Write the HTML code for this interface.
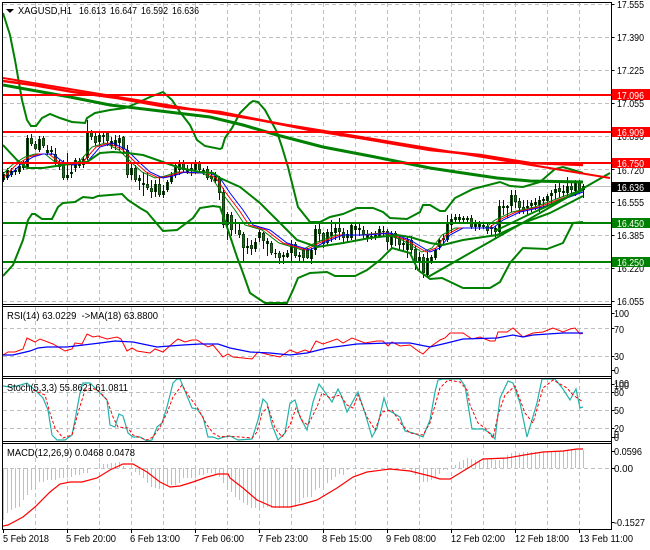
<!DOCTYPE html>
<html><head><meta charset="utf-8"><style>
html,body{margin:0;padding:0;background:#fff}
svg{display:block}
text{font-family:"Liberation Sans",sans-serif;font-size:10.5px;fill:#000}
</style></head><body>
<svg width="650" height="550" viewBox="0 0 650 550" xmlns="http://www.w3.org/2000/svg">
<defs><clipPath id="m"><rect x="3" y="3" width="608" height="301"/></clipPath>
<clipPath id="s"><rect x="3" y="379" width="608" height="62"/></clipPath></defs>
<rect width="650" height="550" fill="#fff"/>
<!-- grid -->
<g stroke="#c0c0c0" stroke-width="1" stroke-dasharray="4 3" fill="none">
<path d="M35.5 3V304M67.5 3V304M99.5 3V304M131.5 3V304M163.5 3V304M195.5 3V304M227.5 3V304M259.5 3V304M291.5 3V304M323.5 3V304M355.5 3V304M387.5 3V304M419.5 3V304M451.5 3V304M483.5 3V304M515.5 3V304M547.5 3V304M579.5 3V304"/>
<path d="M35.5 307V376M67.5 307V376M99.5 307V376M131.5 307V376M163.5 307V376M195.5 307V376M227.5 307V376M259.5 307V376M291.5 307V376M323.5 307V376M355.5 307V376M387.5 307V376M419.5 307V376M451.5 307V376M483.5 307V376M515.5 307V376M547.5 307V376M579.5 307V376"/>
<path d="M35.5 379V441M67.5 379V441M99.5 379V441M131.5 379V441M163.5 379V441M195.5 379V441M227.5 379V441M259.5 379V441M291.5 379V441M323.5 379V441M355.5 379V441M387.5 379V441M419.5 379V441M451.5 379V441M483.5 379V441M515.5 379V441M547.5 379V441M579.5 379V441"/>
<path d="M35.5 444V529M67.5 444V529M99.5 444V529M131.5 444V529M163.5 444V529M195.5 444V529M227.5 444V529M259.5 444V529M291.5 444V529M323.5 444V529M355.5 444V529M387.5 444V529M419.5 444V529M451.5 444V529M483.5 444V529M515.5 444V529M547.5 444V529M579.5 444V529"/>
<path d="M3 4.5H611M3 37.5H611M3 70.5H611M3 103.5H611M3 136.5H611M3 169.5H611M3 202.5H611M3 235.5H611M3 268.5H611M3 301.5H611"/>
<path d="M3 328.5H611M3 356.5H611M3 392.5H611M3 410.5H611M3 428.5H611M3 468.5H611"/>
</g>
<path d="M3 186.5H611" stroke="#c0c0c0" stroke-width="1"/>
<g clip-path="url(#m)" fill="none">
<!-- wicks -->
<path stroke="#002000" stroke-width="1" d="M3.5 172V182M7.5 168V180M11.5 168V177M15.5 168V175M19.5 164V174M23.5 160V170M27.5 135V168M31.5 134V146M35.5 141V150M39.5 136V152M43.5 136V148M47.5 145V155M51.5 146V155M55.5 148V165M59.5 160V170M63.5 160V180M67.5 153V180M71.5 165V178M75.5 158V172M79.5 158V168M83.5 156V168M87.5 120V160M91.5 130V140M95.5 132V146M99.5 132V146M103.5 132V143M107.5 131V146M111.5 137V149M115.5 135V150M119.5 135V150M123.5 136V155M127.5 145V178M131.5 163V180M135.5 165V182M139.5 175V190M143.5 172V196M147.5 172V190M151.5 180V198M155.5 180V197M159.5 178V197M163.5 185V198M167.5 180V192M171.5 172V184M175.5 163V178M179.5 160V175M183.5 160V172M187.5 165V174M191.5 163V176M195.5 160V174M199.5 161V172M203.5 168V175M207.5 166V180M211.5 170V182M215.5 172V183M219.5 176V200M223.5 188V228M227.5 212V240M231.5 212V236M235.5 219V234M239.5 222V238M243.5 232V261M247.5 238V254M251.5 240V255M255.5 238V252M259.5 230V242M263.5 232V249M267.5 238V256M271.5 241V255M275.5 249V258M279.5 251V264M283.5 252V264M287.5 250V258M291.5 240V262M295.5 242V258M299.5 252V263M303.5 248V262M307.5 248V259M311.5 248V264M315.5 225V255M319.5 221V242M323.5 232V248M327.5 229V246M331.5 220V242M335.5 224V240M339.5 218V240M343.5 228V244M347.5 230V242M351.5 224V240M355.5 224V240M359.5 224V236M363.5 226V240M367.5 230V242M371.5 232V240M375.5 231V240M379.5 226V238M383.5 226V236M387.5 229V250M391.5 231V248M395.5 231V246M399.5 235V250M403.5 238V252M407.5 236V258M411.5 236V254M415.5 246V270M419.5 252V272M423.5 254V278M427.5 252V277M431.5 255V264M435.5 248V260M439.5 238V250M443.5 234V244M447.5 215V242M451.5 214V233M455.5 214V224M459.5 214V224M463.5 216V224M467.5 216V222M471.5 215V229M475.5 220V231M479.5 221V230M483.5 222V229M487.5 224V234M491.5 225V235M495.5 226V238M499.5 200V236M503.5 200V215M507.5 205V218M511.5 190V212M515.5 190V208M519.5 198V214M523.5 200V214M527.5 200V216M531.5 200V212M535.5 198V210M539.5 196V212M543.5 197V208M547.5 194V206M551.5 190V204M555.5 184V199M559.5 183V198M563.5 185V197M567.5 177V197M571.5 181V195M575.5 180V196M579.5 180V193M583.5 184V198"/>
<!-- bodies -->
<path stroke="#104010" stroke-width="3" d="M3.5 174V180M7.5 170V178M11.5 171V175M15.5 170V172M19.5 166V172M23.5 163V168M27.5 138V167M31.5 138V144M35.5 144V149M39.5 139V150M43.5 138V146M47.5 150V153M51.5 150V152M55.5 154V163M59.5 163V167M63.5 163V178M67.5 175V178M71.5 172V174M75.5 160V168M79.5 161V166M83.5 159V165M87.5 132V158M91.5 132V137M95.5 136V143M99.5 135V142M103.5 135V137M107.5 133V141M111.5 141V146M115.5 140V146M119.5 138V143M123.5 137V149M127.5 150V175M131.5 168V175M135.5 168V180M139.5 178V181M143.5 183V185M147.5 184V188M151.5 188V192M155.5 184V192M159.5 184V195M163.5 191V195M167.5 182V190M171.5 175V182M175.5 165V175M179.5 162V170M183.5 162V170M187.5 170V172M191.5 168V171M195.5 163V170M199.5 163V170M203.5 170V172M207.5 169V178M211.5 176V179M215.5 176V181M219.5 178V193M223.5 192V225M227.5 214V225M231.5 215V230M235.5 222V224M239.5 230V235M243.5 234V248M247.5 246V248M251.5 245V249M255.5 242V249M259.5 232V238M263.5 233V241M267.5 241V244M271.5 243V253M275.5 253V254M279.5 253V258M283.5 255V257M287.5 253V257M291.5 244V253M295.5 244V256M299.5 255V257M303.5 250V258M307.5 250V258M311.5 250V259M315.5 229V250M319.5 229V234M323.5 233V244M327.5 232V243M331.5 232V236M335.5 228V233M339.5 228V232M343.5 232V238M347.5 234V238M351.5 225V238M355.5 226V230M359.5 228V230M363.5 230V235M367.5 235V238M371.5 236V238M375.5 235V238M379.5 229V236M383.5 231V232M387.5 231V242M391.5 233V245M395.5 233V238M399.5 238V245M403.5 243V245M407.5 240V250M411.5 240V250M415.5 249V262M419.5 257V262M423.5 257V273M427.5 258V275M431.5 257V262M435.5 250V258M439.5 240V247M443.5 238V240M447.5 222V240M451.5 219V225M455.5 217V220M459.5 217V220M463.5 218V220M467.5 218V220M471.5 218V227M475.5 223V227M479.5 224V227M483.5 225V227M487.5 226V231M491.5 227V229M495.5 228V232M499.5 206V232M503.5 206V208M507.5 206V208M511.5 195V206M515.5 195V202M519.5 201V208M523.5 207V211M527.5 206V208M531.5 203V206M535.5 202V205M539.5 200V205M543.5 199V201M547.5 196V201M551.5 193V196M555.5 189V193M559.5 188V192M563.5 191V193M567.5 186V193M571.5 186V190M575.5 182V191M579.5 182V190M583.5 186V190"/>
<path stroke="#000" stroke-width="1" d="M3.5 174V180M7.5 170V178M11.5 171V175M15.5 170V172M19.5 166V172M23.5 163V168M27.5 138V167M39.5 139V150M47.5 150V153M51.5 150V152M67.5 175V178M71.5 172V174M75.5 160V168M79.5 161V166M83.5 159V165M87.5 132V158M99.5 135V142M103.5 135V137M111.5 141V146M115.5 140V146M119.5 138V143M131.5 168V175M139.5 178V181M143.5 183V185M155.5 184V192M163.5 191V195M167.5 182V190M171.5 175V182M175.5 165V175M179.5 162V170M187.5 170V172M191.5 168V171M195.5 163V170M203.5 170V172M215.5 176V181M227.5 214V225M235.5 222V224M247.5 246V248M255.5 242V249M259.5 232V238M267.5 241V244M275.5 253V254M283.5 255V257M287.5 253V257M291.5 244V253M299.5 255V257M311.5 250V259M315.5 229V250M327.5 232V243M331.5 232V236M335.5 228V233M347.5 234V238M351.5 225V238M355.5 226V230M359.5 228V230M367.5 235V238M371.5 236V238M375.5 235V238M379.5 229V236M383.5 231V232M391.5 233V245M403.5 243V245M407.5 240V250M419.5 257V262M427.5 258V275M431.5 257V262M435.5 250V258M439.5 240V247M443.5 238V240M447.5 222V240M451.5 219V225M455.5 217V220M459.5 217V220M463.5 218V220M467.5 218V220M475.5 223V227M479.5 224V227M483.5 225V227M491.5 227V229M495.5 228V232M499.5 206V232M503.5 206V208M507.5 206V208M511.5 195V206M527.5 206V208M531.5 203V206M535.5 202V205M539.5 200V205M543.5 199V201M547.5 196V201M551.5 193V196M555.5 189V193M563.5 191V193M567.5 186V193M575.5 182V191M583.5 186V190"/>
<path stroke="#f00" stroke-width="1" d="M31.5 139V143M35.5 145V148M43.5 139V145M55.5 155V162M59.5 164V166M63.5 164V177M91.5 133V136M95.5 137V142M107.5 134V140M123.5 138V148M127.5 151V174M135.5 169V179M147.5 185V187M151.5 189V191M159.5 185V194M183.5 163V169M199.5 164V169M207.5 170V177M211.5 177V178M219.5 179V192M223.5 193V224M231.5 216V229M239.5 231V234M243.5 235V247M251.5 246V248M263.5 234V240M271.5 244V252M279.5 254V257M295.5 245V255M303.5 251V257M307.5 251V257M319.5 230V233M323.5 234V243M339.5 229V231M343.5 233V237M363.5 231V234M387.5 232V241M395.5 234V237M399.5 239V244M411.5 241V249M415.5 250V261M423.5 258V272M471.5 219V226M487.5 227V230M515.5 196V201M519.5 202V207M523.5 208V210M559.5 189V191M571.5 187V189M579.5 183V189"/>
<!-- fast MAs -->
<polyline stroke="#008000" stroke-width="1" transform="translate(-8 0)" points="8,177 20,165 33,157 43,154 53,154 63,162 73,165 87,162 100,147 113,143 127,150 140,163 150,172 163,178 173,176 185,172 200,173 210,173 220,178 230,193 243,210 253,225 270,230 287,243 310,250 323,243 343,235 367,235 390,233 410,240 430,252 440,248 450,235 463,228 493,228 503,220 520,212 543,207 583,192"/>
<polyline stroke="#f00" stroke-width="1" transform="translate(-4 0)" points="8,177 20,165 33,157 43,154 53,154 63,162 73,165 87,162 100,147 113,143 127,150 140,163 150,172 163,178 173,176 185,172 200,173 210,173 220,178 230,193 243,210 253,225 270,230 287,243 310,250 323,243 343,235 367,235 390,233 410,240 430,252 440,248 450,235 463,228 493,228 503,220 520,212 543,207 583,192"/>
<polyline stroke="#00f" stroke-width="1" points="8,177 20,165 33,157 43,154 53,154 63,162 73,165 87,162 100,147 113,143 127,150 140,163 150,172 163,178 173,176 185,172 200,173 210,173 220,178 230,193 243,210 253,225 270,230 287,243 310,250 323,243 343,235 367,235 390,233 410,240 430,252 440,248 450,235 463,228 493,228 503,220 520,212 543,207 583,192"/>
<!-- Bollinger -->
<g stroke="#008000" stroke-width="2">
<polyline points="3,145 17,160 27,168 43,168 63,165 73,163 87,162 100,153 113,152 127,153 143,155 163,162 180,168 200,172 213,173 220,178 240,187 260,203 280,223 297,240 317,247 343,243 370,238 397,235 410,237 430,243 443,245 463,240 497,235 523,223 550,213 583,196"/>
<polyline points="3,13 10,35 15,60 22,100 27,120 31,126 36,126 42,118 50,114 60,118 72,122 85,123 87,118 95,113 110,110 125,108 135,104 150,97 163,92 172,100 180,112 190,125 197,140 205,146 220,149 222,148 225,138 232,128 240,113 250,103 253,101 258,102 265,110 277,132 282,147 288,167 293,187 298,207 310,222 320,222 330,217 343,214 357,208 373,208 383,212 390,218 407,219 420,212 423,205 430,205 440,211 445,211 455,198 473,189 500,182 510,186 523,187 540,182 555,169 563,167 573,170 583,173"/>
<polyline points="3,276 13,265 23,240 28,220 32,214 35,214 42,219 52,219 58,207 63,203 75,202 83,197 93,198 98,196 122,194 128,200 140,208 147,212 163,231 177,230 193,218 200,208 213,206 220,207 227,227 237,257 243,273 250,293 265,303 287,303 293,290 298,278 310,273 327,272 335,276 355,276 367,270 380,260 392,248 410,253 418,270 430,279 442,278 463,288 490,288 500,282 510,263 523,248 547,249 563,243 573,223 583,222"/>
<polyline stroke-width="2" points="495,231 530,214 583,190"/>
<polyline points="428,277 610,173"/>
</g>
<!-- long MAs -->
<polyline stroke="#008000" stroke-width="3" points="3,85 70,97 110,105 210,117 243,125 277,135 323,147 370,156 430,168 463,173 497,178 530,181 583,182"/>
<polyline stroke="#f00" stroke-width="2.5" points="3,81 33,85 73,92 117,98 167,107 220,112 260,120 310,130 360,138 430,150 480,155 530,163 583,165"/>
<polyline stroke="#f00" stroke-width="2" points="3,78 610,178"/>
<!-- horizontal levels -->
<path stroke="#f00" stroke-width="2" d="M3 95H611M3 132H611M3 163H611"/>
<path stroke="#008000" stroke-width="2" d="M3 223H611M3 262H611"/>
</g>
<!-- RSI -->
<g fill="none" stroke-width="1">
<polyline stroke="#f00" points="3,355 8,352 15,352 23,349 27,338 35,342 40,339 53,344 65,351 72,349 75,343 82,344 87,334 93,337 98,336 107,339 117,337 121,339 127,351 132,348 137,351 150,353 155,349 163,352 173,343 178,339 185,342 192,340 197,340 208,347 213,345 223,357 228,354 233,357 243,358 252,359 258,352 270,355 280,357 290,350 297,353 305,350 310,352 316,341 323,344 337,339 343,343 352,338 365,343 377,341 383,341 388,346 392,342 400,346 410,345 418,351 423,354 430,347 440,340 445,338 450,333 463,333 472,339 480,337 490,341 495,341 498,332 507,332 513,328 523,337 533,333 543,332 553,328 563,332 570,329 575,328 580,334 583,333"/>
<polyline stroke="#00f" stroke-width="1.2" points="3,355 13,355 30,351 38,348 47,347 67,347 100,343 115,341 133,342 157,347 183,345 200,344 218,344 230,348 250,352 270,353 290,355 307,353 327,348 357,344 390,343 410,343 430,347 447,343 463,339 497,338 513,335 523,337 533,335 563,333 583,333"/>
</g>
<!-- Stoch -->
<g fill="none" clip-path="url(#s)">
<polyline stroke="#20b2aa" stroke-width="1.2" points="3,386 10,387 17,386 27,383 37,392 43,398 48,410 52,435 57,440 65,440 72,435 75,420 80,393 83,383 90,383 100,393 107,400 110,425 115,427 119,414 123,416 128,433 133,437 140,437 147,441 152,440 157,427 162,423 167,407 173,383 177,379 180,379 192,408 197,409 203,417 208,437 213,437 218,439 224,437 230,436 238,440 252,439 258,420 263,399 267,403 272,425 278,440 285,433 290,403 295,400 300,417 307,430 313,402 319,384 332,402 338,389 342,397 347,412 358,392 365,413 372,437 377,428 384,398 388,410 400,417 405,431 413,433 423,437 430,420 435,392 438,380 443,379 460,379 465,386 472,429 483,429 490,433 495,439 500,398 508,381 513,383 520,403 527,437 537,403 542,379 555,379 563,389 570,400 576,389 580,408 583,407"/>
<polyline stroke="#f00" stroke-dasharray="3 2" stroke-width="1" points="33,390 45,395 50,413 55,428 63,438 72,435 78,413 85,390 92,388 100,392 107,400 113,417 118,427 128,428 133,435 147,440 153,437 160,427 167,413 173,397 182,385 188,395 197,407 207,425 213,433 220,437 228,436 240,437 252,438 257,432 262,413 268,407 275,428 282,437 290,425 296,408 303,422 308,425 317,407 322,393 330,398 340,395 347,405 353,408 358,395 367,417 375,430 382,412 392,410 402,425 410,433 423,435 430,423 440,388 448,380 460,382 467,390 470,405 478,423 485,428 493,438 498,415 505,395 515,386 525,413 533,423 543,388 553,380 567,388 573,395 583,402"/>
</g>
<!-- MACD hist -->
<path fill="none" stroke="#c0c0c0" stroke-width="1" d="M3.5 468V520M7.5 468V513M11.5 468V510M15.5 468V508M19.5 468V507M23.5 468V500M27.5 468V495M31.5 468V490M35.5 468V490M39.5 468V482M43.5 468V482M47.5 468V480M51.5 468V480M55.5 468V480M59.5 468V478M63.5 468V478M67.5 468V478M71.5 468V477M75.5 468V475M79.5 468V475M83.5 468V473M87.5 468V473M99.5 468V463M103.5 468V464M107.5 468V464M111.5 468V463M115.5 468V463M119.5 468V462M123.5 468V466M135.5 468V472M139.5 468V475M143.5 468V478M147.5 468V483M151.5 468V487M155.5 468V488M159.5 468V489M163.5 468V489M167.5 468V485M171.5 468V485M175.5 468V485M179.5 468V483M183.5 468V478M187.5 468V478M191.5 468V478M195.5 468V478M199.5 468V475M203.5 468V475M207.5 468V473M211.5 468V473M215.5 468V475M219.5 468V477M223.5 468V483M227.5 468V490M231.5 468V492M235.5 468V497M239.5 468V500M243.5 468V503M247.5 468V505M251.5 468V508M255.5 468V508M259.5 468V507M263.5 468V508M267.5 468V507M271.5 468V508M275.5 468V508M279.5 468V508M283.5 468V508M287.5 468V508M291.5 468V507M295.5 468V507M299.5 468V503M303.5 468V498M307.5 468V497M311.5 468V497M315.5 468V490M319.5 468V488M323.5 468V488M327.5 468V483M331.5 468V480M335.5 468V477M339.5 468V474M343.5 468V475M347.5 468V470M411.5 468V470M415.5 468V475M419.5 468V480M423.5 468V482M427.5 468V482M431.5 468V480M435.5 468V477M439.5 468V474M443.5 468V470M447.5 468V470M451.5 468V467M455.5 468V465M459.5 468V462M463.5 468V460M467.5 468V458M471.5 468V459M475.5 468V460M479.5 468V460M483.5 468V460M487.5 468V459M491.5 468V459M495.5 468V460M499.5 468V460M503.5 468V458M507.5 468V455M511.5 468V453M515.5 468V453M519.5 468V453M523.5 468V452M527.5 468V452M531.5 468V452M535.5 468V452M539.5 468V452M543.5 468V452M547.5 468V451M551.5 468V451M555.5 468V451M559.5 468V451M563.5 468V451M567.5 468V451M571.5 468V450M575.5 468V450M579.5 468V450M583.5 468V450"/>
<polyline fill="none" stroke="#f00" stroke-width="1.2" points="3,526 8,525 23,517 35,507 50,492 60,484 70,482 82,482 97,478 110,470 123,464 133,464 147,472 160,482 170,487 180,486 193,482 207,477 218,474 228,474 230,478 243,488 257,500 273,507 290,507 303,504 317,500 337,488 353,477 367,472 390,469 410,471 430,476 440,479 450,479 460,473 473,465 483,459 507,458 530,454 543,452 563,451 577,449 583,449"/>
<!-- frames -->
<g stroke="#000" stroke-width="1" fill="none">
<path d="M2.5 2.5H611.5V529.5H2.5Z"/>
<path d="M2.5 304.5H611.5M2.5 306.5H611.5M2.5 376.5H611.5M2.5 378.5H611.5M2.5 441.5H611.5M2.5 443.5H611.5"/>
<path d="M611.5 4.5h3M611.5 37.5h3M611.5 70.5h3M611.5 103.5h3M611.5 136.5h3M611.5 169.5h3M611.5 202.5h3M611.5 235.5h3M611.5 268.5h3M611.5 301.5h3M611.5 313.5h3M611.5 328.5h3M611.5 356.5h3M611.5 370.5h3M611.5 384.5h3M611.5 392.5h3M611.5 410.5h3M611.5 428.5h3M611.5 437.5h3M611.5 451.5h3M611.5 468.5h3M611.5 522.5h3"/>
<path d="M3.5 529V533M67.5 529V533M131.5 529V533M195.5 529V533M259.5 529V533M323.5 529V533M387.5 529V533M451.5 529V533M515.5 529V533M579.5 529V533"/>
</g>
<path d="M6 9H14L10 13Z" fill="#000"/>
<!-- header text -->
<text x="18" y="14" textLength="54" lengthAdjust="spacingAndGlyphs">XAGUSD,H1</text>
<text x="79" y="14" textLength="27" lengthAdjust="spacingAndGlyphs">16.613</text>
<text x="110" y="14" textLength="27" lengthAdjust="spacingAndGlyphs">16.647</text>
<text x="141" y="14" textLength="27" lengthAdjust="spacingAndGlyphs">16.592</text>
<text x="172" y="14" textLength="27" lengthAdjust="spacingAndGlyphs">16.636</text>
<text x="7" y="319" textLength="151" lengthAdjust="spacingAndGlyphs">RSI(14) 63.0229 &#160;-&gt;MA(18) 63.8800</text>
<text x="7" y="391" textLength="121" lengthAdjust="spacingAndGlyphs">Stoch(5,3,3) 55.8621 61.0811</text>
<text x="7" y="456" textLength="128" lengthAdjust="spacingAndGlyphs">MACD(12,26,9) 0.0468 0.0478</text>
<!-- price axis -->
<g>
<text x="617" y="8" textLength="27" lengthAdjust="spacingAndGlyphs">17.555</text>
<text x="617" y="41" textLength="27" lengthAdjust="spacingAndGlyphs">17.390</text>
<text x="617" y="74" textLength="27" lengthAdjust="spacingAndGlyphs">17.225</text>
<text x="617" y="107" textLength="27" lengthAdjust="spacingAndGlyphs">17.055</text>
<text x="617" y="140" textLength="27" lengthAdjust="spacingAndGlyphs">16.890</text>
<text x="617" y="174" textLength="27" lengthAdjust="spacingAndGlyphs">16.720</text>
<text x="617" y="206" textLength="27" lengthAdjust="spacingAndGlyphs">16.555</text>
<text x="617" y="239" textLength="27" lengthAdjust="spacingAndGlyphs">16.385</text>
<text x="617" y="272" textLength="27" lengthAdjust="spacingAndGlyphs">16.220</text>
<text x="617" y="305" textLength="27" lengthAdjust="spacingAndGlyphs">16.055</text>
</g>
<rect x="612" y="89" width="38" height="11" fill="#f00"/><text x="617" y="99" textLength="27" lengthAdjust="spacingAndGlyphs" style="fill:#fff">17.096</text>
<rect x="612" y="127" width="38" height="10" fill="#f00"/><text x="617" y="136" textLength="27" lengthAdjust="spacingAndGlyphs" style="fill:#fff">16.909</text>
<rect x="612" y="158" width="38" height="10" fill="#f00"/><text x="617" y="167" textLength="27" lengthAdjust="spacingAndGlyphs" style="fill:#fff">16.750</text>
<rect x="612" y="182" width="38" height="10" fill="#000"/><text x="617" y="191" textLength="27" lengthAdjust="spacingAndGlyphs" style="fill:#fff">16.636</text>
<rect x="612" y="218" width="38" height="10" fill="#008000"/><text x="617" y="227" textLength="27" lengthAdjust="spacingAndGlyphs" style="fill:#fff">16.450</text>
<rect x="612" y="257" width="38" height="10" fill="#008000"/><text x="617" y="266" textLength="27" lengthAdjust="spacingAndGlyphs" style="fill:#fff">16.250</text>
<!-- sub axes -->
<text x="614" y="317" textLength="15" lengthAdjust="spacingAndGlyphs">100</text>
<text x="614" y="333" textLength="10" lengthAdjust="spacingAndGlyphs">70</text>
<text x="614" y="360" textLength="10" lengthAdjust="spacingAndGlyphs">30</text>
<text x="614" y="374" textLength="5" lengthAdjust="spacingAndGlyphs">0</text>
<text x="614" y="387" textLength="15" lengthAdjust="spacingAndGlyphs">100</text>
<text x="614" y="389" textLength="15" lengthAdjust="spacingAndGlyphs">100</text>
<text x="614" y="396" textLength="10" lengthAdjust="spacingAndGlyphs">80</text>
<text x="614" y="414" textLength="10" lengthAdjust="spacingAndGlyphs">50</text>
<text x="614" y="432" textLength="10" lengthAdjust="spacingAndGlyphs">20</text>
<text x="614" y="438" textLength="5" lengthAdjust="spacingAndGlyphs">0</text>
<text x="614" y="441" textLength="5" lengthAdjust="spacingAndGlyphs">0</text>
<text x="614" y="455" textLength="28" lengthAdjust="spacingAndGlyphs">0.0596</text>
<text x="614" y="472" textLength="19" lengthAdjust="spacingAndGlyphs">0.00</text>
<text x="614" y="526" textLength="31" lengthAdjust="spacingAndGlyphs">-0.1527</text>
<!-- time axis -->
<text x="3" y="542" textLength="46" lengthAdjust="spacingAndGlyphs">5 Feb 2018</text>
<text x="66" y="542" textLength="50" lengthAdjust="spacingAndGlyphs">5 Feb 20:00</text>
<text x="130" y="542" textLength="50" lengthAdjust="spacingAndGlyphs">6 Feb 13:00</text>
<text x="194" y="542" textLength="50" lengthAdjust="spacingAndGlyphs">7 Feb 06:00</text>
<text x="258" y="542" textLength="50" lengthAdjust="spacingAndGlyphs">7 Feb 23:00</text>
<text x="322" y="542" textLength="50" lengthAdjust="spacingAndGlyphs">8 Feb 15:00</text>
<text x="386" y="542" textLength="50" lengthAdjust="spacingAndGlyphs">9 Feb 08:00</text>
<text x="451" y="542" textLength="54" lengthAdjust="spacingAndGlyphs">12 Feb 02:00</text>
<text x="515" y="542" textLength="54" lengthAdjust="spacingAndGlyphs">12 Feb 18:00</text>
<text x="579" y="542" textLength="54" lengthAdjust="spacingAndGlyphs">13 Feb 11:00</text>
</svg>
</body></html>
